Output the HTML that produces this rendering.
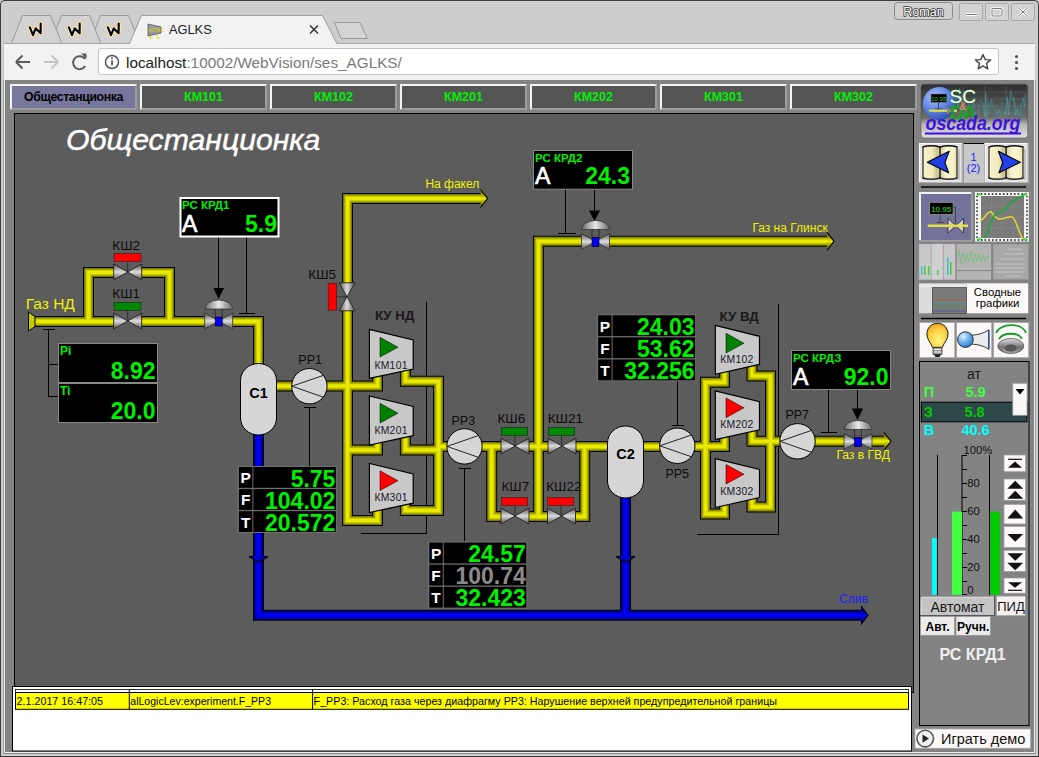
<!DOCTYPE html>
<html><head><meta charset="utf-8">
<style>
*{margin:0;padding:0;box-sizing:border-box}
html,body{width:1039px;height:757px;overflow:hidden;background:#cdcdcd;font-family:"Liberation Sans",sans-serif}
.a{position:absolute}
#win{position:absolute;left:0;top:0;width:1039px;height:757px;background:#cdcdcd;border:1px solid #3c3c3c;border-bottom:none;border-radius:5px 5px 0 0}
#toolbar{left:4px;top:43px;width:1031px;height:37px;background:#f2f2f2}
#addr{left:98px;top:48px;width:901px;height:27px;background:#fff;border:1px solid #c4c4c4;border-radius:3px}
#page{left:3px;top:80px;width:1033px;height:674px;background:#838383;border-left:1px solid #a0a0a0;border-right:1px solid #a0a0a0}
#pin{left:4px;top:80px;width:1031px;height:673px;border-left:1px solid #ececec;border-right:1px solid #ececec;border-bottom:1.5px solid #f0f0f0}
#bot{left:0;top:756px;width:1039px;height:1px;background:#333}
.tb{position:absolute;top:84px;height:26px;background:#555;border-top:2px solid #f4f4f4;border-left:2px solid #f4f4f4;border-right:2px solid #9c9c9c;border-bottom:2px solid #9c9c9c;color:#00f000;font-weight:bold;font-size:12.5px;text-align:center;line-height:23px}
#mimic{left:14px;top:113px;width:900px;height:580px;background:#5c5c5c;border:1px solid #000}
</style></head><body>
<div id="win"></div>
<div class="a" id="toolbar"></div>
<div class="a" id="addr"></div>
<div class="a" id="page"></div><div class="a" id="pin"></div><div class="a" id="bot"></div>
<div class="tb" style="left:10px;width:127px;background:#77779e;color:#000;letter-spacing:-0.4px;font-size:12.3px">Общестанционка</div>
<div class="tb" style="left:140px;width:127px">КМ101</div>
<div class="tb" style="left:270px;width:127px">КМ102</div>
<div class="tb" style="left:400px;width:127px">КМ201</div>
<div class="tb" style="left:530px;width:127px">КМ202</div>
<div class="tb" style="left:660px;width:127px">КМ301</div>
<div class="tb" style="left:790px;width:127px">КМ302</div>
<div class="a" id="mimic"></div>
<svg class="a" style="left:0;top:0" width="1039" height="80" viewBox="0 0 1039 80" font-family="Liberation Sans, sans-serif">
<!-- inactive tabs -->
<g fill="#d2d2d2" stroke="#9a9a9a" stroke-width="1">
<path d="M89.5,43.5 L100.5,15.5 H128.5 L140,43.5"/>
<path d="M50.5,43.5 L61.5,15.5 H89.5 L101,43.5"/>
<path d="M11.5,43.5 L22.5,15.5 H50.5 L62,43.5"/>
</g>
<!-- active tab -->
<path d="M4,43.5 H131 M336,43.5 H1035" stroke="#a8a8a8" stroke-width="1"/>
<path d="M129.5,44.5 L141.5,15.5 H322.5 L337,44.5Z" fill="#f2f2f2"/>
<path d="M129.5,43.5 L141.5,15.5 H322.5 L337,43.5" fill="none" stroke="#a0a0a0" stroke-width="1"/>
<!-- new tab btn -->
<path d="M334.5,22.5 H360 L367.5,38.5 H341Z" fill="#d4d4d4" stroke="#9a9a9a" stroke-width="1"/>
<!-- W favicons -->
<defs><path id="wfav" d="M29.9,27.3 L33,35.2 L35.7,28.4 L40.6,33.2 L40.7,23.6" fill="none" stroke-linejoin="round" stroke-linecap="round"/></defs>
<g><use href="#wfav" stroke="#f0c070" stroke-width="5.2"/><use href="#wfav" stroke="#fff8e8" stroke-width="4"/><use href="#wfav" stroke="#000" stroke-width="2.2"/></g>
<g transform="translate(39,0)"><use href="#wfav" stroke="#f0c070" stroke-width="5.2"/><use href="#wfav" stroke="#fff8e8" stroke-width="4"/><use href="#wfav" stroke="#000" stroke-width="2.2"/></g>
<g transform="translate(78,0)"><use href="#wfav" stroke="#f0c070" stroke-width="5.2"/><use href="#wfav" stroke="#fff8e8" stroke-width="4"/><use href="#wfav" stroke="#000" stroke-width="2.2"/></g>
<!-- favicon active -->
<g>
<path d="M148,24 L161,27 V33 L148,36Z" fill="#9a9a9a" stroke="#555" stroke-width="0.8"/>
<text x="148.5" y="32" font-size="5" fill="#d8d800">АГЛКС</text>
<path d="M150,36 v2 h3 M157,35 v3 h3" stroke="#d8d800" stroke-width="1" fill="none"/>
</g>
<text x="169" y="34" font-size="12.8" fill="#202020">AGLKS</text>
<path d="M310,25.5 L318,33.5 M318,25.5 L310,33.5" stroke="#333" stroke-width="1.5"/>
<!-- window buttons -->
<rect x="894.5" y="2.5" width="58" height="17" rx="3" fill="#d0d0d0" stroke="#8a8a8a"/>
<text x="923.5" y="16" font-size="12.5" text-anchor="middle" fill="#fff" stroke="#333" stroke-width="1.6" paint-order="stroke">Roman</text>
<rect x="959.5" y="3.5" width="23" height="17" rx="1" fill="#d2d2d2" stroke="#a8a8a8"/>
<rect x="985.5" y="3.5" width="23" height="17" rx="1" fill="#d2d2d2" stroke="#a8a8a8"/>
<rect x="1011.5" y="3.5" width="23" height="17" rx="1" fill="#d2d2d2" stroke="#a8a8a8"/>
<path d="M966,14.5 H977" stroke="#fff" stroke-width="3"/>
<path d="M966,14.5 H977" stroke="#777" stroke-width="1"/>
<rect x="992" y="8.5" width="10" height="7.5" rx="1" fill="none" stroke="#fff" stroke-width="2.6"/>
<rect x="992" y="8.5" width="10" height="7.5" rx="1" fill="none" stroke="#777" stroke-width="1"/>
<path d="M1018,7.5 L1028,16.5 M1028,7.5 L1018,16.5" stroke="#fff" stroke-width="2.6"/>
<path d="M1018,7.5 L1028,16.5 M1028,7.5 L1018,16.5" stroke="#777" stroke-width="1"/>
<!-- nav icons -->
<g stroke="#5a5a5a" stroke-width="2" fill="none">
<path d="M16,62 H30 M16,62 L22.5,55.5 M16,62 L22.5,68.5"/>
</g>
<g stroke="#c4c4c4" stroke-width="2" fill="none">
<path d="M58,62 H44 M58,62 L51.5,55.5 M58,62 L51.5,68.5"/>
</g>
<g stroke="#5a5a5a" stroke-width="2" fill="none">
<path d="M85,59 A6.5,6.5 0 1 0 85.2,66"/>
</g>
<path d="M81,53.5 L86.5,53.5 L86.5,59 Z" fill="#5a5a5a"/>
<!-- info icon -->
<circle cx="112" cy="62" r="6.5" fill="none" stroke="#555" stroke-width="1.5"/>
<rect x="111.2" y="60.2" width="1.7" height="5" fill="#555"/>
<circle cx="112" cy="58.2" r="1" fill="#555"/>
<text x="126" y="67.5" font-size="15.3" fill="#202020">localhost<tspan fill="#7a7a7a">:10002/WebVision/ses_AGLKS/</tspan></text>
<!-- star -->
<path d="M983,54.5 L985.2,59.6 L990.6,60 L986.5,63.4 L987.8,68.8 L983,65.9 L978.2,68.8 L979.5,63.4 L975.4,60 L980.8,59.6Z" fill="none" stroke="#444" stroke-width="1.4" stroke-linejoin="round"/>
<g fill="#555"><circle cx="1016.5" cy="56.5" r="1.6"/><circle cx="1016.5" cy="62.5" r="1.6"/><circle cx="1016.5" cy="68.5" r="1.6"/></g>
</svg>
<svg class="a" style="left:0;top:0" width="1039" height="757" viewBox="0 0 1039 757" font-family="Liberation Sans, sans-serif">
<defs>
<linearGradient id="gv" x1="0" y1="0" x2="0" y2="1">
<stop offset="0" stop-color="#505050"/><stop offset="0.5" stop-color="#dcdcdc"/><stop offset="1" stop-color="#505050"/>
</linearGradient>
<linearGradient id="gh" x1="0" y1="0" x2="1" y2="0">
<stop offset="0" stop-color="#505050"/><stop offset="0.5" stop-color="#dcdcdc"/><stop offset="1" stop-color="#505050"/>
</linearGradient>
<linearGradient id="gd" x1="0" y1="0" x2="1" y2="0">
<stop offset="0" stop-color="#6a6a6a"/><stop offset="0.5" stop-color="#e8e8e8"/><stop offset="1" stop-color="#6a6a6a"/>
</linearGradient>
<g id="vh"><path d="M-14,-8 L0,0 L-14,8Z M14,-8 L0,0 L14,8Z" fill="url(#gv)" stroke="#222" stroke-width="0.9"/></g>
<g id="vv"><path d="M-8,-14 L0,0 L8,-14Z M-8,14 L0,0 L8,14Z" fill="url(#gh)" stroke="#222" stroke-width="0.9"/></g>
<g id="cv">
<path d="M-14,-12 A14,9 0 0 1 14,-12 Z" fill="url(#gd)" stroke="#333" stroke-width="0.8"/>
<path d="M-3.5,-12 V-4 M3.5,-12 V-4" stroke="#222" stroke-width="0.8" fill="none"/>
<path d="M-14,-8 L0,0 L-14,8Z M14,-8 L0,0 L14,8Z" fill="url(#gv)" stroke="#333" stroke-width="0.8"/>
<rect x="-3.5" y="-4" width="7" height="9" fill="#0000f0" stroke="#000" stroke-width="0.6"/>
</g>
</defs>
<!-- title -->
<text x="66" y="150" font-size="30.2" font-style="italic" fill="#fff" stroke="#fff" stroke-width="0.45">Общестанционка</text>

<!-- thin black lines -->
<g stroke="#000" stroke-width="1" fill="none">
<path d="M218.5,237 V290"/>
<path d="M246.5,237 V313.5 M239,313.5 H255"/>
<path d="M48.5,329.5 V396.5 H58 M43,329.5 H55 M48.5,364.5 H58"/>
<path d="M309.5,407.5 V466 M304,407.5 H316"/>
<path d="M464.5,468.5 V541 M459,468.5 H471"/>
<path d="M426.5,302 V533.5 H361"/>
<path d="M565.5,190 V233.5 M558,233.5 H576"/>
<path d="M594.5,190 V212"/>
<path d="M677.5,380 V425.5 M672,425.5 H684"/>
<path d="M778.5,304 V534.5 H697.5"/>
<path d="M828.5,390 V432.5 M821,432.5 H837"/>
<path d="M857.5,390 V410"/>
</g>
<!-- yellow pipes -->
<g fill="none" stroke-linejoin="miter" stroke-linecap="butt" id="ypipes">
<g id="yp">
<path id="p1" d="M34,321.5 H258.5 V366"/>
<path id="p2" d="M88.5,321.5 V272.5 H169.5 V321.5"/>
<path id="p3" d="M270,386 H377.5 V376"/>
<path id="p4" d="M481,198.5 H347.5 V520.5 H377.5 V509"/>
<path id="p5" d="M347.5,450 H377.5 V442"/>
<path id="p6" d="M405.4,368 V381.3 H438.5 V510.5 H405.4 V501"/>
<path id="p7" d="M405.4,434 V450 H438.5"/>
<path id="p8" d="M438.5,446.5 H610"/>
<path id="p9" d="M491.7,446.5 V516.6 H584.7 V446.5"/>
<path id="p10" d="M538.4,516.6 V241.3 H828"/>
<path id="p11" d="M640,446.5 H724.5 V437.5"/>
<path id="p12" d="M724.5,372 V382.3 H705.5 V514 H724.5 V505"/>
<path id="p13" d="M752,366 V376 H770.5 V507 H752 V497"/>
<path id="p14" d="M752,431 V441.3 H884"/>
</g>
</g>
<use href="#yp" stroke="#000" stroke-width="11" fill="none"/>
<use href="#yp" stroke="#7c7c00" stroke-width="9" fill="none"/>
<use href="#yp" stroke="#a4a400" stroke-width="7" fill="none"/>
<use href="#yp" stroke="#cccc00" stroke-width="5" fill="none"/>
<use href="#yp" stroke="#eaea00" stroke-width="2.8" fill="none"/>
<!-- yellow arrowheads -->
<linearGradient id="ya" x1="0" y1="0" x2="0" y2="1"><stop offset="0.2" stop-color="#7c7c00"/><stop offset="0.5" stop-color="#eaea00"/><stop offset="0.8" stop-color="#7c7c00"/></linearGradient>
<g fill="url(#ya)" stroke="#000" stroke-width="1.1">
<path d="M480.5,189.5 L487.5,198.5 L480.5,207.5"/>
<path d="M827,232.3 L834,241.3 L827,250.3"/>
<path d="M884,432.3 L891,441.3 L884,450.3"/>
</g>
<path d="M28.5,312 L35,316.5 V326.5 L28.5,331Z" fill="#c8c800" stroke="#000" stroke-width="1"/>
<!-- blue pipes -->
<g id="bp" fill="none">
<path d="M258.5,430 V615.2 H862"/>
<path d="M625.5,495 V615.2"/>
</g>
<use href="#bp" stroke="#000" stroke-width="11" fill="none"/>
<use href="#bp" stroke="#000078" stroke-width="9" fill="none"/>
<use href="#bp" stroke="#0000a8" stroke-width="7" fill="none"/>
<use href="#bp" stroke="#0000d4" stroke-width="5" fill="none"/>
<use href="#bp" stroke="#0000f4" stroke-width="2.8" fill="none"/>
<linearGradient id="ba" x1="0" y1="0" x2="0" y2="1"><stop offset="0.2" stop-color="#000078"/><stop offset="0.5" stop-color="#0000f4"/><stop offset="0.8" stop-color="#000078"/></linearGradient><path d="M861,606 L868,615.2 L861,624.5" fill="url(#ba)" stroke="#000" stroke-width="1.1"/>
<path d="M249.5,556.5 H267.5 L258.5,562.5Z" fill="#0000c8"/><path d="M249,556.5 H253.5 M263.5,556.5 H268 M249,556.5 L258.5,562.5 L268,556.5" fill="none" stroke="#000" stroke-width="1.1"/>
<path d="M616.5,556.5 H634.5 L625.5,562.5Z" fill="#0000c8"/><path d="M616,556.5 H620.5 M630.5,556.5 H635 M616,556.5 L625.5,562.5 L635,556.5" fill="none" stroke="#000" stroke-width="1.1"/>

<g fill="#000">
<path d="M213.5,288 H224 L218.5,299Z"/>
<path d="M589,210.5 H600 L594.5,221Z"/>
<path d="M852,408.5 H863 L857.5,420Z"/>
</g>

<!-- valves -->
<g fill="#5c5c5c">
<rect x="114" y="266" width="27.4" height="12.5"/>
<rect x="114" y="315" width="27.4" height="12.5"/>
<rect x="341" y="283" width="12.5" height="27.6"/>
<rect x="501" y="440" width="28" height="12.5"/>
<rect x="548" y="440" width="28" height="12.5"/>
<rect x="501" y="510" width="28" height="12.5"/>
<rect x="547.5" y="510" width="28" height="12.5"/>
<rect x="204.7" y="316" width="28" height="12.5"/>
<rect x="581.5" y="235.5" width="28" height="12.5"/>
<rect x="844" y="435.5" width="28" height="12.5"/>
</g>

<use href="#vh" x="127.7" y="272"/>
<use href="#vh" x="127.7" y="321"/>
<use href="#vv" x="347" y="296.8"/>
<use href="#vh" x="515" y="446"/>
<use href="#vh" x="562" y="446"/>
<use href="#vh" x="515" y="516"/>
<use href="#vh" x="561.5" y="516"/>
<use href="#cv" x="218.7" y="321"/>
<use href="#cv" x="595.5" y="241.5"/>
<use href="#cv" x="858" y="441.5"/>
<path d="M127.7,261.5 V272 M127.7,310.5 V321 M336.6,296.8 H347 M515,435.5 V446 M561.5,435.5 V446 M515,505.5 V516 M561,505.5 V516" stroke="#222" stroke-width="0.8"/>
<!-- valve state rects -->
<g stroke="#222" stroke-width="0.6">
<rect x="114" y="253.5" width="27" height="8" fill="#ff0000"/>
<rect x="114" y="302.4" width="27" height="8" fill="#008800"/>
<rect x="328.2" y="283.2" width="8.4" height="27" fill="#ff0000"/>
<rect x="501.4" y="427.4" width="26.3" height="8" fill="#008800"/>
<rect x="548.4" y="427.4" width="26.3" height="8" fill="#008800"/>
<rect x="501.4" y="497.5" width="26.3" height="8" fill="#ff0000"/>
<rect x="547.5" y="497.5" width="26.3" height="8" fill="#ff0000"/>
</g>

<!-- vessels -->
<g fill="#d6d6d6" stroke="#000" stroke-width="1">
<rect x="240.5" y="363.5" width="36" height="71.5" rx="18" ry="17"/>
<rect x="607.5" y="426" width="36" height="72" rx="18" ry="17"/>
</g>
<g font-weight="bold" font-size="14.5" text-anchor="middle" fill="#000">
<text x="258.5" y="397.8">С1</text>
<text x="625.5" y="458.6">С2</text>
</g>
<!-- pumps -->
<g fill="#d6d6d6" stroke="#000" stroke-width="1">
<circle cx="309.4" cy="386.2" r="17.7"/>
<circle cx="464.5" cy="446.4" r="17.7"/>
<circle cx="677.3" cy="445.8" r="17.7"/>
<circle cx="797.5" cy="441.3" r="17.7"/>
</g>
<g stroke="#111" stroke-width="0.9" fill="none">
<path d="M291.9,386.2 L323,375.5 M291.9,386.2 L323,397"/>
<path d="M447,446.4 L478,435.7 M447,446.4 L478,457.2"/>
<path d="M659.8,445.8 L691,435.1 M659.8,445.8 L691,456.6"/>
<path d="M780,441.3 L811,430.6 M780,441.3 L811,452.1"/>
</g>
<!-- compressors -->
<g fill="#c8c8c8" stroke="#000" stroke-width="1.2">
<path d="M369.4,329.4 L413.2,339.9 V369.1 L369.4,378.4Z"/>
<path d="M369.4,396 L413.2,406.5 V435.7 L369.4,445Z"/>
<path d="M369.4,463.5 L413.2,474 V503.2 L369.4,512.5Z"/>
<path d="M715.3,325.4 L759.5,336.3 V364.4 L715.3,374.3Z"/>
<path d="M715.3,390.8 L759.5,401.7 V429.8 L715.3,439.7Z"/>
<path d="M715.3,458.6 L759.5,469.5 V497.6 L715.3,507.5Z"/>
</g>
<g stroke="#000" stroke-width="0.5">
<path d="M380,337.3 L398,347.2 L380,357.1Z" fill="#008000"/>
<path d="M380,403.3 L398,413.2 L380,423.1Z" fill="#008000"/>
<path d="M380,470.8 L398,480.7 L380,490.6Z" fill="#ff0000"/>
<path d="M726,333.3 L744,343.2 L726,353.1Z" fill="#008000"/>
<path d="M726,397.9 L744,407.8 L726,417.7Z" fill="#ff0000"/>
<path d="M726,464.5 L744,474.2 L726,484Z" fill="#ff0000"/>
</g>
<g font-size="10.4" fill="#1a1a2a" letter-spacing="0.25">
<text x="374.4" y="368.8">КМ101</text>
<text x="374.4" y="433.6">КМ201</text>
<text x="374.4" y="500.8">КМ301</text>
<text x="720.3" y="363.3">КМ102</text>
<text x="720.3" y="428">КМ202</text>
<text x="720.3" y="494.6">КМ302</text>
</g>
<!-- labels -->
<g font-size="13.5" fill="#0c0c0c">
<text x="112.3" y="250">КШ2</text>
<text x="112.3" y="297.5">КШ1</text>
<text x="308.3" y="279.4">КШ5</text>
<text x="497.4" y="422.6">КШ6</text>
<text x="547.7" y="422.6">КШ21</text>
<text x="501.4" y="490.6">КШ7</text>
<text x="546.2" y="490.6">КШ22</text>
</g>
<g font-size="12.5" fill="#0c0c0c">
<text x="298.3" y="363.5">РР1</text>
<text x="451.5" y="425.4">РР3</text>
<text x="665.4" y="478.4">РР5</text>
<text x="785.4" y="419.4">РР7</text>
</g>
<g font-size="13.3" font-weight="bold" fill="#1a1a1a">
<text x="374.9" y="320.1">КУ НД</text>
<text x="719.5" y="320.8">КУ ВД</text>
</g>
<g fill="#f0f000">
<text x="25.8" y="309" font-size="15.5">Газ НД</text>
<text x="425.4" y="188" font-size="12">На факел</text>
<text x="752.4" y="232" font-size="12">Газ на Глинск</text>
<text x="836.5" y="459.4" font-size="12">Газ в ГВД</text>
</g>
<text x="839.3" y="602.6" font-size="12" fill="#2020ff">Слив</text>

<!-- RC boxes -->
<g>
<rect x="180.5" y="198" width="98" height="38.5" fill="#000" stroke="#fff" stroke-width="2"/>
<text x="182" y="209" font-size="11.5" font-weight="bold" fill="#00f000">РС КРД1</text>
<text x="182" y="232.2" font-size="23" fill="#fff" stroke="#fff" stroke-width="0.7">А</text>
<text x="277" y="232.2" font-size="23" font-weight="bold" fill="#00f000" text-anchor="end">5.9</text>

<rect x="533.5" y="150.5" width="99" height="38.7" fill="#000" stroke="#888" stroke-width="1"/>
<text x="535" y="161.7" font-size="11.5" font-weight="bold" fill="#00f000">РС КРД2</text>
<text x="535" y="184.4" font-size="23" fill="#fff" stroke="#fff" stroke-width="0.7">А</text>
<text x="630" y="184.4" font-size="23" font-weight="bold" fill="#00f000" text-anchor="end">24.3</text>

<rect x="791.5" y="350.5" width="99" height="39" fill="#000" stroke="#888" stroke-width="1"/>
<text x="793" y="361.8" font-size="11.5" font-weight="bold" fill="#00f000">РС КРДЗ</text>
<text x="793" y="385" font-size="23" fill="#fff" stroke="#fff" stroke-width="0.7">А</text>
<text x="888.5" y="385" font-size="23" font-weight="bold" fill="#00f000" text-anchor="end">92.0</text>
</g>
<!-- Pi/Ti -->
<g>
<rect x="58.5" y="343.5" width="99" height="39" fill="#000" stroke="#888"/>
<rect x="58.5" y="383.5" width="99" height="39" fill="#000" stroke="#888"/>
<text x="60" y="354.9" font-size="12" font-weight="bold" fill="#00f000">Pi</text>
<text x="60" y="394.9" font-size="12" font-weight="bold" fill="#00f000">Ti</text>
<text x="155.5" y="378.9" font-size="23" font-weight="bold" fill="#00f000" text-anchor="end">8.92</text>
<text x="155.5" y="418.9" font-size="23" font-weight="bold" fill="#00f000" text-anchor="end">20.0</text>
</g>
<!--PFT--><rect x="237.4" y="466" width="99.5" height="67" fill="#6e6e6e"/><rect x="238.9" y="467.0" width="13.5" height="20.8" fill="#000"/><rect x="253.4" y="467.0" width="82.5" height="20.8" fill="#000"/><text x="245.70000000000002" y="483.3" font-size="15.5" font-weight="bold" fill="#fff" text-anchor="middle">P</text><text x="335.4" y="486.5" font-size="23" font-weight="bold" fill="#00f000" text-anchor="end">5.75</text><rect x="238.9" y="489.1" width="13.5" height="20.8" fill="#000"/><rect x="253.4" y="489.1" width="82.5" height="20.8" fill="#000"/><text x="245.70000000000002" y="505.4" font-size="15.5" font-weight="bold" fill="#fff" text-anchor="middle">F</text><text x="335.4" y="508.6" font-size="23" font-weight="bold" fill="#00f000" text-anchor="end">104.02</text><rect x="238.9" y="511.2" width="13.5" height="20.8" fill="#000"/><rect x="253.4" y="511.2" width="82.5" height="20.8" fill="#000"/><text x="245.70000000000002" y="527.5" font-size="15.5" font-weight="bold" fill="#fff" text-anchor="middle">T</text><text x="335.4" y="530.7" font-size="23" font-weight="bold" fill="#00f000" text-anchor="end">20.572</text><rect x="427.8" y="541.6" width="99.5" height="67" fill="#6e6e6e"/><rect x="429.3" y="542.6" width="13.5" height="20.8" fill="#000"/><rect x="443.8" y="542.6" width="82.5" height="20.8" fill="#000"/><text x="436.1" y="558.9" font-size="15.5" font-weight="bold" fill="#fff" text-anchor="middle">P</text><text x="525.8" y="562.1" font-size="23" font-weight="bold" fill="#00f000" text-anchor="end">24.57</text><rect x="429.3" y="564.7" width="13.5" height="20.8" fill="#000"/><rect x="443.8" y="564.7" width="82.5" height="20.8" fill="#000"/><text x="436.1" y="581.0" font-size="15.5" font-weight="bold" fill="#fff" text-anchor="middle">F</text><text x="525.8" y="584.2" font-size="23" font-weight="bold" fill="#8a8a8a" text-anchor="end">100.74</text><rect x="429.3" y="586.8" width="13.5" height="20.8" fill="#000"/><rect x="443.8" y="586.8" width="82.5" height="20.8" fill="#000"/><text x="436.1" y="603.1" font-size="15.5" font-weight="bold" fill="#fff" text-anchor="middle">T</text><text x="525.8" y="606.3" font-size="23" font-weight="bold" fill="#00f000" text-anchor="end">32.423</text><rect x="596.6" y="314.3" width="99.5" height="67" fill="#6e6e6e"/><rect x="598.1" y="315.3" width="13.5" height="20.8" fill="#000"/><rect x="612.6" y="315.3" width="82.5" height="20.8" fill="#000"/><text x="604.9" y="331.6" font-size="15.5" font-weight="bold" fill="#fff" text-anchor="middle">P</text><text x="694.6" y="334.8" font-size="23" font-weight="bold" fill="#00f000" text-anchor="end">24.03</text><rect x="598.1" y="337.4" width="13.5" height="20.8" fill="#000"/><rect x="612.6" y="337.4" width="82.5" height="20.8" fill="#000"/><text x="604.9" y="353.7" font-size="15.5" font-weight="bold" fill="#fff" text-anchor="middle">F</text><text x="694.6" y="356.9" font-size="23" font-weight="bold" fill="#00f000" text-anchor="end">53.62</text><rect x="598.1" y="359.5" width="13.5" height="20.8" fill="#000"/><rect x="612.6" y="359.5" width="82.5" height="20.8" fill="#000"/><text x="604.9" y="375.8" font-size="15.5" font-weight="bold" fill="#fff" text-anchor="middle">T</text><text x="694.6" y="379.0" font-size="23" font-weight="bold" fill="#00f000" text-anchor="end">32.256</text>
</svg>
<svg class="a" style="left:0;top:0" width="1039" height="757" viewBox="0 0 1039 757" font-family="Liberation Sans, sans-serif">
<defs>
<linearGradient id="lg1" x1="0" y1="0" x2="0" y2="1">
<stop offset="0" stop-color="#2e2e2e"/><stop offset="0.62" stop-color="#6a6a6a"/><stop offset="0.75" stop-color="#b8b8b8"/><stop offset="1" stop-color="#e0e0e0"/>
</linearGradient>
<radialGradient id="sph" cx="0.35" cy="0.3" r="0.75">
<stop offset="0" stop-color="#a8c0ff"/><stop offset="0.6" stop-color="#5b7fe0"/><stop offset="1" stop-color="#3050b0"/>
</radialGradient>
<linearGradient id="book" x1="0" y1="0" x2="1" y2="0">
<stop offset="0" stop-color="#fdf8d0"/><stop offset="0.4" stop-color="#f8f2c8"/><stop offset="0.5" stop-color="#a8a070"/><stop offset="0.52" stop-color="#f8f2c8"/><stop offset="1" stop-color="#f0eac0"/>
</linearGradient>
<radialGradient id="bulb" cx="0.55" cy="0.7" r="0.7">
<stop offset="0" stop-color="#fff480"/><stop offset="0.65" stop-color="#fcd040"/><stop offset="1" stop-color="#f0a020"/>
</radialGradient>
<radialGradient id="ball" cx="0.35" cy="0.3" r="0.7">
<stop offset="0" stop-color="#e0f0ff"/><stop offset="0.5" stop-color="#78b8f0"/><stop offset="1" stop-color="#3080d0"/>
</radialGradient>
<linearGradient id="spk" x1="0" y1="0" x2="0" y2="1">
<stop offset="0" stop-color="#e0e0e0"/><stop offset="0.6" stop-color="#707070"/><stop offset="1" stop-color="#b0b0b0"/>
</linearGradient>
</defs>
<!-- logo -->
<rect x="921" y="84.2" width="106.7" height="53.8" rx="3" fill="url(#lg1)" stroke="#555" stroke-width="0.6"/>
<g stroke="#8a8a8a" stroke-width="0.4" opacity="0.7">
<path d="M923,92 H1026 M923,99 H1026 M923,106 H1026 M923,113 H1026 M923,120 H1026"/>
<path d="M963,86 V120 M985,86 V120 M1006,86 V120"/>
</g>
<path d="M924.0,111.5 L925.7,96.1 L928.5,103.5 L931.5,119.2 L933.5,107.4 L935.8,112.4 L938.2,110.1 L940.6,120.4 L942.9,106.6 L945.5,101.4 L947.4,121.4 L949.7,109.8 L951.2,106.2 L953.6,95.5 L956.0,112.1 L957.6,111.9 L959.8,113.3 L961.8,114.1 L964.5,95.6 L966.0,113.3 L969.0,101.8 L971.2,111.0 L973.2,104.8 L975.1,105.0 L977.5,103.1 L979.6,115.9 L981.1,110.4 L983.7,103.4 L985.6,116.7 L987.4,100.1 L989.6,113.8 L991.2,103.7 L993.2,117.5 L995.4,118.1 L997.1,104.1 L999.6,118.9 L1001.8,101.1 L1003.5,109.3 L1005.3,116.8 L1008.0,100.0 L1009.9,116.8 L1012.4,116.8 L1014.4,98.5 L1016.4,116.4 L1018.3,104.4 L1020.4,106.3 L1022.5,119.9 L1024.2,95.1" fill="none" stroke="#30a0a0" stroke-width="0.6" opacity="0.45"/>
<path d="M955.0,95.6 L956.7,99.8 L958.4,108.0 L959.5,88.4 L961.5,96.3 L962.7,119.9 L964.3,114.8 L965.9,108.5 L967.1,108.3 L969.1,104.7 L971.0,109.5 L972.1,112.3 L973.8,97.6 L974.8,115.7 L976.4,111.0 L978.4,110.9 L980.5,100.6 L982.5,102.2 L984.6,116.1 L985.7,92.4 L987.0,118.9 L988.5,108.1 L989.9,104.2 L991.3,99.2 L993.1,106.7 L995.1,109.8 L997.3,115.4 L999.4,109.5 L1000.6,115.5 L1002.8,117.0 L1004.5,110.8 L1005.7,114.6 L1007.4,97.1 L1008.5,115.3 L1010.7,90.8 L1012.6,101.1 L1013.8,97.4 L1015.7,115.9 L1016.8,107.7 L1017.9,111.0 L1019.3,116.2 L1021.4,104.2 L1023.6,97.9 L1024.7,107.2 L1025.8,94.3" fill="none" stroke="#40b8b8" stroke-width="0.7" opacity="0.6"/>
<circle cx="939.4" cy="103.4" r="16.5" fill="url(#sph)"/>
<rect x="931" y="94" width="15.7" height="8.3" fill="#000" stroke="#777" stroke-width="0.5"/>
<text x="938.8" y="100.8" font-size="6" fill="#30d030" text-anchor="middle">10.95</text>
<path d="M938.5,102.3 V109 M935,109 H942" stroke="#333" stroke-width="0.8"/>
<path d="M929,110.7 H957" stroke="#e0e040" stroke-width="2.2"/>
<path d="M947,106 L953,110.7 L947,115" fill="#888" stroke="#333" stroke-width="0.6"/>
<text x="949.5" y="102.8" font-size="19" fill="#fff" stroke="#20a020" stroke-width="0.8" paint-order="stroke">SC</text>
<text x="950" y="118.8" font-size="18.5" fill="#10b010" stroke="#10a010" stroke-width="0.5">DA</text>
<text x="959.5" y="110" font-size="10" fill="#ffd0c0" stroke="#c06040" stroke-width="0.4">&amp;</text>
<text x="925.5" y="129.8" font-size="19.5" font-weight="bold" font-style="italic" fill="#4010e0" textLength="95" lengthAdjust="spacingAndGlyphs">oscada.org</text>
<rect x="925" y="132.5" width="96" height="2" fill="#4010e0"/>

<!-- nav buttons -->
<linearGradient id="pgL" x1="0" y1="0" x2="1" y2="0"><stop offset="0" stop-color="#f8f2c8"/><stop offset="0.55" stop-color="#f2eabc"/><stop offset="0.85" stop-color="#c8c090"/><stop offset="1" stop-color="#eee6b8"/></linearGradient>
<linearGradient id="pgR" x1="0" y1="0" x2="1" y2="0"><stop offset="0" stop-color="#d0c898"/><stop offset="0.35" stop-color="#f8f4d0"/><stop offset="0.8" stop-color="#f8f2c8"/><stop offset="1" stop-color="#e0d8a8"/></linearGradient>
<g id="navL">
<rect x="919" y="143" width="43.5" height="39.8" fill="#e4e4e4"/>
<path d="M919.5,182.5 V143.5 H962" stroke="#fafafa" stroke-width="1.2" fill="none"/>
<path d="M919.5,182.5 H962 V143.5" stroke="#b0b0b0" stroke-width="1" fill="none"/>
<rect x="923" y="147" width="17" height="31" fill="url(#pgL)"/>
<rect x="940" y="147" width="17" height="31" fill="url(#pgR)"/>
<path d="M923,147 V178 M957,147 V178" stroke="#222" stroke-width="1.2"/>
<path d="M922.5,147 C928,145.5 935,145.5 940,147 C945,145.5 952,145.5 957.5,147 M922.5,178 C928,179.5 935,179.5 940,178 C945,179.5 952,179.5 957.5,178" stroke="#111" stroke-width="1.6" fill="none"/>
<path d="M940,147 V178.5" stroke="#111" stroke-width="1.4"/>
<path d="M959,149 V179 H925" stroke="#888" stroke-width="1.2" fill="none" opacity="0.6"/>
<path d="M927.3,162.3 L949.2,151.2 L944.9,162.5 L948.6,172.8Z" fill="#2040e8" stroke="#000" stroke-width="1.1" stroke-linejoin="round"/>
</g>
<rect x="963.7" y="143" width="20.3" height="39.8" fill="#c8c8c8"/>
<path d="M963.7,143.5 H984" stroke="#000" stroke-width="1"/>
<text x="973.5" y="161.2" font-size="11" fill="#2020ff" text-anchor="middle">1</text>
<text x="973.5" y="171.5" font-size="11" fill="#2020ff" text-anchor="middle">(2)</text>
<rect x="984.8" y="143" width="43.5" height="39.8" fill="#e4e4e4"/>
<path d="M985.3,182.5 V143.5 H1028" stroke="#fafafa" stroke-width="1.2" fill="none"/>
<path d="M985.3,182.5 H1028 V143.5" stroke="#b0b0b0" stroke-width="1" fill="none"/>
<rect x="989" y="147" width="17" height="31" fill="url(#pgL)"/>
<rect x="1006" y="147" width="17" height="31" fill="url(#pgR)"/>
<path d="M989,147 V178 M1023,147 V178" stroke="#222" stroke-width="1.2"/>
<path d="M988.5,147 C994,145.5 1001,145.5 1006,147 C1011,145.5 1018,145.5 1023.5,147 M988.5,178 C994,179.5 1001,179.5 1006,178 C1011,179.5 1018,179.5 1023.5,178" stroke="#111" stroke-width="1.6" fill="none"/>
<path d="M1006,147 V178.5" stroke="#111" stroke-width="1.4"/>
<path d="M1025,149 V179 H991" stroke="#888" stroke-width="1.2" fill="none" opacity="0.6"/>
<path d="M1020.3,162.3 L998.4,151.2 L1002.7,162.5 L999,172.8Z" fill="#2040e8" stroke="#000" stroke-width="1.1" stroke-linejoin="round"/>
<path d="M921,187 H1026" stroke="#000" stroke-width="1.3"/>

<!-- icon1 mnemo -->
<rect x="919" y="192" width="53.7" height="49.6" fill="#a0a0a0"/>
<rect x="919" y="192" width="52" height="48" fill="#f4f4f4"/>
<rect x="921" y="194" width="50" height="46" fill="#72729a"/>
<rect x="929.4" y="202.3" width="23.7" height="12.2" fill="#000" stroke="#999" stroke-width="0.8"/>
<text x="941.2" y="211.8" font-size="8" fill="#30e030" text-anchor="middle">10.95</text>
<path d="M940.2,214.5 V222.5 M937,222.5 H944 M953,207 H955.5 V226" stroke="#444" stroke-width="1" fill="none"/>
<path d="M948,218.5 L955.7,225.7 L948,233Z M963.5,218.5 L955.7,225.7 L963.5,233Z" fill="#d0d0d0" stroke="#222" stroke-width="0.8"/>
<path d="M927.7,225.7 H968" stroke="#e8e040" stroke-width="2.5"/>
<!-- icon2 trend -->
<rect x="975" y="192" width="53.8" height="49.6" fill="#f4f4f4"/>
<rect x="977" y="194" width="50" height="46" fill="none" stroke="#000" stroke-width="1.3" stroke-dasharray="1.5,2.2"/>
<rect x="981" y="196" width="43" height="42" fill="#7a7a7a"/>
<g stroke="#8a8a8a" stroke-width="0.6"><path d="M991.5,196 V238 M1002,196 V238 M1013,196 V238 M981,206.5 H1024 M981,217 H1024 M981,227.5 H1024"/></g>
<path d="M980,221 C985,219 988,210 991,212 C994,214 995,219 1000,219 C1005,219 1008,216 1012,217 C1016,218 1018,232 1023,239" fill="none" stroke="#e0d030" stroke-width="1.7"/>
<path d="M984,238 C990,233 990,219 995,215 C1000,211 1003,213 1007,207 C1011,202 1017,198 1024,195" fill="none" stroke="#10b030" stroke-width="1.5"/>
<g fill="#40f040"><circle cx="979.5" cy="194.5" r="1.6"/><circle cx="1024.5" cy="194.5" r="1.6"/><circle cx="979.5" cy="239" r="1.6"/><circle cx="1024.5" cy="239" r="1.6"/></g>

<!-- thumbnails -->
<rect x="919" y="244" width="12" height="35.8" fill="#c8c8c8" stroke="#9ab" stroke-width="0.5"/>
<rect x="931.5" y="244" width="11.5" height="35.8" fill="#d0d0d0" stroke="#bbb" stroke-width="0.5"/>
<rect x="943.5" y="244" width="11.7" height="35.8" fill="#c8c8c8" stroke="#b9b" stroke-width="0.5"/>
<g fill="#40d040"><rect x="924" y="266" width="1.5" height="9"/><rect x="928" y="266" width="1.5" height="9"/><rect x="937" y="270" width="1.5" height="5"/><rect x="950" y="262" width="1.5" height="13"/></g>
<g fill="#40c0d0"><rect x="921" y="266" width="1.5" height="9"/><rect x="947" y="257" width="1.5" height="18"/></g>
<rect x="956.6" y="244" width="34.6" height="35.8" fill="#b4b4b4"/>
<path d="M957,258 L959,250 L961,264 L963,252 L965,262 L967,254 L969,262 L971,251 L973,263 L975,254 L977,262 L979,254 L981,262 L983,255 L985,261 L987,255 L989,260" fill="none" stroke="#70c070" stroke-width="0.7"/>
<path d="M957,270.6 H991" stroke="#777" stroke-width="0.8"/>
<rect x="993" y="244" width="35.8" height="35.8" fill="#a8a8a8" stroke="#888" stroke-width="0.5"/>
<g stroke="#d8d8d8" stroke-width="0.6"><path d="M1008,249 H1022 M1004,254 H1024 M1000,259 H1025 M996,264 H1025 M996,268 H1025 M996,272 H1024 M1005,276 H1020"/></g>
<!-- summary graphs -->
<rect x="919" y="283.3" width="48" height="30" fill="#dcdcdc"/>
<rect x="932.3" y="287.5" width="34.2" height="25.8" fill="#7a7a7a" stroke="#333" stroke-width="0.6"/>
<g stroke-width="0.5"><path d="M933,300 H966" stroke="#b06030"/><path d="M933,302.5 H966" stroke="#30b0b0"/><path d="M933,306 H966" stroke="#30a030"/><path d="M933,311 H966" stroke="#3030b0"/></g>
<rect x="919.5" y="284" width="47" height="3" fill="#e8e8e8"/>
<rect x="967" y="283.3" width="61.2" height="30" fill="#fcf8f8"/>
<text x="997.5" y="295.5" font-size="11.3" fill="#000" text-anchor="middle">Сводные</text>
<text x="997.5" y="306.8" font-size="11.3" fill="#000" text-anchor="middle">графики</text>
<path d="M921,318.5 H1026" stroke="#000" stroke-width="1.3"/>

<!-- icon buttons -->
<g fill="#fcf8f8" stroke="#a8a8a8" stroke-width="1">
<rect x="919.5" y="322.5" width="35.3" height="35.2"/>
<rect x="956.5" y="322.5" width="35.3" height="35.2"/>
<rect x="993.5" y="322.5" width="35.3" height="35.2"/>
</g>
<path d="M937.4,323.3 C943.7,323.3 948,328 948,334 C948,339.5 944.3,342 942.3,347.4 H932.5 C930.5,342 926.9,339.5 926.9,334 C926.9,328 931.2,323.3 937.4,323.3Z" fill="url(#bulb)" stroke="#1a1a1a" stroke-width="1"/>
<path d="M933,347.4 H942 V354.5 H933Z" fill="#9a9a9a" stroke="#222" stroke-width="0.7"/>
<path d="M934,349.5 H941 M934,352 H941" stroke="#f0f0f0" stroke-width="1"/>
<path d="M934,354.5 H941 L939.5,357 H935.5Z" fill="#222"/>
<path d="M967,335.2 C977,335.5 983.5,333.5 988.8,329.8 V349.3 C983.5,345.8 977,343.8 967,344Z" fill="#ececec" stroke="#222" stroke-width="0.9"/>
<path d="M988.8,330 V349" stroke="#2050a0" stroke-width="1.4"/>
<circle cx="965.4" cy="339.6" r="7.8" fill="url(#ball)" stroke="#1a1a1a" stroke-width="0.9"/>
<path d="M996,333 C1000,323 1022,322 1026,333" fill="none" stroke="#10a020" stroke-width="1.8"/>
<path d="M999,339 C1003,332 1019,332 1022,339" fill="none" stroke="#10a020" stroke-width="1.8"/>
<ellipse cx="1010.8" cy="346" rx="13" ry="7.5" fill="url(#spk)" stroke="#444" stroke-width="0.7"/>
<ellipse cx="1010.8" cy="348" rx="6" ry="3.5" fill="#555"/>

<!-- control panel -->
<rect x="919.5" y="361.5" width="109.5" height="364" fill="#838383" stroke="#000" stroke-width="1"/>
<text x="974" y="378.5" font-size="14" fill="#1a1a1a" text-anchor="middle">ат</text>
<text x="923.8" y="396.8" font-size="14.5" font-weight="bold" fill="#40ff40">П</text>
<text x="975.5" y="396.8" font-size="14.5" font-weight="bold" fill="#40ff40" text-anchor="middle">5.9</text>
<rect x="921.3" y="402.2" width="105.7" height="19.6" fill="#2c4848" stroke="#000" stroke-width="1"/>
<text x="923.8" y="416.8" font-size="14.5" font-weight="bold" fill="#00cc00">З</text>
<text x="974.5" y="416.8" font-size="14.5" font-weight="bold" fill="#00cc00" text-anchor="middle">5.8</text>
<text x="923.8" y="434.6" font-size="14.5" font-weight="bold" fill="#00ffff">В</text>
<text x="975.5" y="434.6" font-size="14.5" font-weight="bold" fill="#00ffff" text-anchor="middle">40.6</text>
<rect x="1012.8" y="383.3" width="14.2" height="32" fill="#fcf8f8" stroke="#a0a0a0" stroke-width="0.8"/>
<path d="M1015.5,389 H1024.5 L1020,394.5Z" fill="#000"/>
<!-- bars -->
<path d="M937.5,455 V595 M962,455 V595 M989.5,455 V595" stroke="#000" stroke-width="1"/>
<rect x="932.1" y="538" width="4.7" height="56.7" fill="#00ffff"/>
<rect x="952" y="511.6" width="10" height="83.1" fill="#40ff40"/>
<rect x="990.3" y="511.6" width="9.7" height="83.1" fill="#00cc00"/>
<g stroke="#000" stroke-width="1"><path d="M962,455.5 H967 M962,469.5 H967 M962,483.5 H967 M962,497.5 H967 M962,511.5 H967 M962,525.5 H967 M962,539.5 H967 M962,553.5 H967 M962,567.5 H967 M962,581.5 H967 M962,594.5 H967"/></g>
<g font-size="11.3" fill="#111">
<text x="963.5" y="453.5">100%</text>
<text x="967.3" y="487">80</text>
<text x="967.3" y="515">60</text>
<text x="967.3" y="543">40</text>
<text x="967.3" y="571">20</text>
<text x="967.3" y="593.5">0</text>
</g>
<!-- arrow buttons -->
<g fill="#fcf8f8" stroke="#a0a0a0" stroke-width="0.8">
<rect x="1004" y="455" width="21.7" height="16.7"/>
<rect x="1004" y="479" width="21.7" height="21.3"/>
<rect x="1004" y="504.4" width="21.7" height="19.6"/>
<rect x="1004" y="526.4" width="21.7" height="21.1"/>
<rect x="1004" y="550.3" width="21.7" height="21.1"/>
<rect x="1004" y="578" width="21.7" height="15.2"/>
</g>
<g fill="#111">
<path d="M1008,459.3 H1022" stroke="#111" stroke-width="1.2"/>
<path d="M1008,467.8 H1022 L1015,461.5Z"/>
<path d="M1007.3,488.8 H1023.2 L1015.2,480.7Z M1007.3,498.8 H1023.2 L1015.2,490.8Z"/>
<path d="M1007.3,518.5 H1023.2 L1015.2,509.4Z"/>
<path d="M1007.3,534 H1023.2 L1015.2,541.8Z"/>
<path d="M1007.3,553.2 H1023.2 L1015.2,560.8Z M1007.3,562.7 H1023.2 L1015.2,570.2Z"/>
<path d="M1008,582.3 H1022 L1015,587.8Z"/>
<path d="M1008,590.3 H1022" stroke="#111" stroke-width="1.2"/>
</g>
<!-- mode -->
<rect x="920.5" y="596.5" width="74" height="19" fill="#c4c4c4" stroke="#444" stroke-width="0.8"/>
<path d="M921,597 H994 M921,597 V615" stroke="#e8e8e8" stroke-width="1"/>
<text x="957.5" y="611.5" font-size="14" fill="#1a1a1a" text-anchor="middle">Автомат</text>
<rect x="996.4" y="596.1" width="29" height="19.6" fill="#f4f0f0" stroke="#a0a0a0" stroke-width="0.8"/>
<text x="1011" y="611" font-size="13" fill="#111" text-anchor="middle">ПИД</text>
<rect x="920.5" y="616.4" width="34" height="18.9" fill="#ececec" stroke="#999" stroke-width="0.8"/>
<text x="937.5" y="630.5" font-size="12" font-weight="bold" fill="#000" text-anchor="middle">Авт.</text>
<rect x="956" y="616.4" width="34.5" height="18.9" fill="#ececec" stroke="#999" stroke-width="0.8"/>
<text x="973.2" y="630.5" font-size="12" font-weight="bold" fill="#000" text-anchor="middle">Ручн.</text>
<text x="972.6" y="659.9" font-size="16" font-weight="bold" fill="#f0f0f0" text-anchor="middle">РС КРД1</text>
<!-- play demo -->
<rect x="915" y="729" width="115.4" height="19.2" fill="#fcf8f8" stroke="#b0b0b0" stroke-width="0.8"/>
<circle cx="925.2" cy="738.6" r="8.3" fill="#f0f0f0" stroke="#555" stroke-width="1.6"/>
<path d="M922.5,734.5 L929,738.6 L922.5,742.7Z" fill="#222"/>
<text x="941" y="743.7" font-size="14.5" fill="#111">Играть демо</text>

<!-- alarm table -->
<rect x="12.5" y="686.5" width="899" height="64.5" fill="#fff" stroke="#000" stroke-width="1"/>
<rect x="15.5" y="689.5" width="893" height="3" fill="#fff" stroke="#000" stroke-width="0.8"/>
<rect x="15.5" y="692.5" width="893" height="16.8" fill="#ffff00" stroke="#000" stroke-width="1"/>
<path d="M129.3,689.5 V709.3 M312.6,689.5 V709.3" stroke="#000" stroke-width="1"/>
<g font-size="11" fill="#000">
<text x="16.6" y="704.6" textLength="86.4" lengthAdjust="spacingAndGlyphs">2.1.2017 16:47:05</text>
<text x="130.3" y="704.6" textLength="140.7" lengthAdjust="spacingAndGlyphs">alLogicLev:experiment.F_PP3</text>
<text x="313.6" y="704.6" textLength="463.4" lengthAdjust="spacingAndGlyphs">F_PP3: Расход газа через диафрагму PP3: Нарушение верхней предупредительной границы</text>
</g>
</svg>

</body></html>
